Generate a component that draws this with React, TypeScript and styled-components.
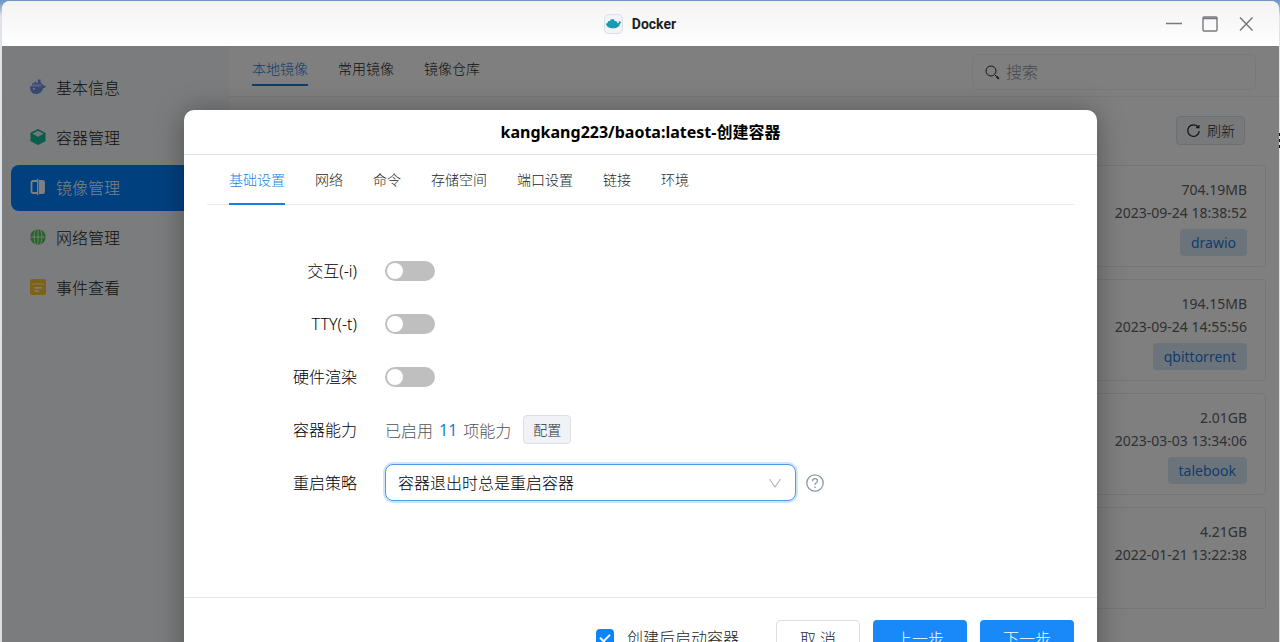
import React from "react";
import styled, { createGlobalStyle, css } from "styled-components";

const Global = createGlobalStyle`
  *, *::before, *::after { box-sizing: border-box; }
  body {
    margin: 0;
    overflow: hidden;
    font-family: "Noto Sans", "Noto Sans CJK SC", sans-serif;
    font-size: 16px;
    color: #1d1f23;
  }
  button, input, select { font: inherit; color: inherit; margin: 0; }
  button { cursor: pointer; padding: 0; border: 0; background: none; }
`;

const Desktop = styled.div`
  position: relative;
  height: 100vh;
  padding: 1px 1px 0 2px;
  overflow: hidden;
  background: linear-gradient(180deg, #6f93c4 0, #8fa9cc 6px, #dfe3ea 16px, #dcdee2 100%);
`;

const Window = styled.div`
  display: flex;
  flex-direction: column;
  height: 100%;
  border-radius: 8px 8px 0 0;
  overflow: hidden;
  background: #fff;
`;

const EdgeMarks = styled.svg`
  position: absolute;
  top: 132px;
  right: 0;
`;

const TitleBar = styled.header`
  display: grid;
  grid-template-columns: 1fr auto 1fr;
  align-items: center;
  flex: none;
  height: 45px;
  padding: 0 25px 0 24px;
  background: linear-gradient(180deg, #f3f3f4, #fff);
`;

const AppTitle = styled.h1`
  grid-column: 2;
  display: flex;
  align-items: center;
  gap: 9px;
  margin: 0;
  font-family: Roboto, "Noto Sans CJK SC", sans-serif;
  font-size: 14px;
  line-height: 20px;
  font-weight: 700;
`;

const WindowControls = styled.div`
  display: flex;
  justify-content: flex-end;
  gap: 20px;
`;

const ControlButton = styled.button`
  display: flex;
  width: 16px;
  height: 16px;
  color: #77797d;
`;

const Body = styled.div`
  position: relative;
  display: flex;
  flex: 1;
  min-height: 0;
`;

const Sidebar = styled.nav`
  display: flex;
  flex-direction: column;
  gap: 4px;
  flex: none;
  width: 228px;
  padding: 19px 9px;
  background: #f6f8fb;
`;

const NavItem = styled.button<{ $active?: boolean }>`
  display: flex;
  align-items: center;
  gap: 10px;
  height: 46px;
  padding: 0 19px 2px;
  border-radius: 8px;
  color: ${(p) => (p.$active ? "#fff" : "#1d1f23")};
  background: ${(p) => (p.$active ? "#0080ff" : "none")};
  font-weight: 300;
  svg { flex: none; }
`;

const Content = styled.main`
  flex: 1;
  min-width: 0;
`;

const TopBar = styled.div`
  display: flex;
  justify-content: space-between;
  height: 51px;
  padding: 8px 23px 0 22px;
  border-bottom: 1px solid #f0f1f3;
`;

const TabList = styled.div`
  display: flex;
  gap: 30px;
`;

const Tab = styled.button<{ $active?: boolean; $tall?: boolean }>`
  height: ${(p) => (p.$tall ? 50 : 32)}px;
  padding-top: ${(p) => (p.$tall ? 2 : 0)}px;
  font-size: 14px;
  line-height: 20px;
  font-weight: 300;
  color: ${(p) => (p.$active ? "#1a7fdc" : "#1d1f23")};
  border-bottom: 2px solid ${(p) => (p.$active ? "#1a7fdc" : "transparent")};
`;

const SearchBox = styled.label`
  display: flex;
  align-items: center;
  gap: 6px;
  width: 284px;
  height: 36px;
  padding: 0 12px;
  border: 1px solid #f0f1f3;
  border-radius: 6px;
  font-weight: 300;
  input {
    flex: 1;
    min-width: 0;
    padding: 0;
    border: 0;
    outline: 0;
    background: none;
  }
  input::placeholder { color: #8f929a; opacity: 1; }
`;

const Toolbar = styled.div`
  display: flex;
  justify-content: flex-end;
  padding: 19px 34px 20px;
`;

const SmallButton = styled.button`
  display: flex;
  align-items: center;
  justify-content: center;
  gap: 6px;
  height: 29px;
  padding: 0 9px;
  border: 1px solid #dcdfe6;
  border-radius: 4px;
  background: #f0f2f5;
  font-size: 14px;
  line-height: 20px;
  font-weight: 300;
`;

const CardList = styled.ul`
  display: flex;
  flex-direction: column;
  gap: 12px;
  margin: 0;
  padding: 0 13px 0 22px;
  list-style: none;
`;

const Card = styled.li`
  display: flex;
  flex-direction: column;
  align-items: flex-end;
  height: 102px;
  padding: 12px 18px;
  border: 1px solid #e9ebee;
  border-radius: 4px;
  color: #606266;
  font-size: 14px;
  line-height: 23px;
`;

const Tag = styled.span`
  margin-top: 5px;
  padding: 0 11px;
  border-radius: 4px;
  background: #d9e9f7;
  color: #1f78d8;
  line-height: 27px;
`;

const Overlay = styled.div`
  position: absolute;
  inset: 0;
  display: flex;
  justify-content: center;
  align-items: flex-start;
  padding: 64px 16px 0;
  overflow: hidden;
  background: rgba(0, 0, 0, 0.5);
`;

const Dialog = styled.section`
  width: 913px;
  max-width: 100%;
  border-radius: 10px;
  background: #fff;
  box-shadow: 0 2px 28px rgba(0, 0, 0, 0.35);
`;

const DialogTitle = styled.h2`
  margin: 0;
  padding: 10px 0;
  border-bottom: 1px solid #dfe1e4;
  color: #000;
  font-size: 16px;
  line-height: 24px;
  font-weight: 700;
  text-align: center;
`;

const DialogTabs = styled(TabList)`
  height: 50px;
  margin: 0 23px;
  padding: 0 22px;
  border-bottom: 1px solid #e8eaec;
`;

const Form = styled.form`
  display: grid;
  grid-template-columns: 150px 1fr;
  grid-auto-rows: 53px;
  column-gap: 28px;
  align-items: center;
  height: 392px;
  padding: 39px 23px 0;
  font-weight: 300;
`;

const FieldLabel = styled.label`
  text-align: right;
  line-height: 24px;
  color: #000;
`;

const Field = styled.div`
  display: flex;
  align-items: center;
  color: #505256;
`;

const Switch = styled.input`
  appearance: none;
  width: 50px;
  height: 20px;
  border-radius: 10px;
  background: #bfbfbf;
  cursor: pointer;
  &::before {
    content: "";
    display: block;
    width: 16px;
    height: 16px;
    margin: 2px;
    border-radius: 50%;
    background: #fff;
  }
  &:checked { background: #1989fa; }
  &:checked::before { margin-left: 32px; }
`;

const Count = styled.span`
  margin: 0 6px;
  color: #1a7fdc;
  font-weight: 400;
`;

const ConfigButton = styled(SmallButton)`
  margin-left: 12px;
  color: #2c2e33;
`;

const SelectWrap = styled.div`
  display: flex;
  align-items: center;
  width: 411px;
  svg {
    flex: none;
    margin-left: -28px;
    pointer-events: none;
  }
`;

const Select = styled.select`
  appearance: none;
  width: 100%;
  height: 37px;
  padding: 0 36px 0 12px;
  border: 1px solid #4a9bea;
  border-radius: 8px;
  outline: 0;
  background: #fff;
  color: #000;
  box-shadow: 0 0 0 2px #cfe5fb;
`;

const HelpButton = styled.button`
  display: flex;
  margin-left: 10px;
  color: #8a9bab;
`;

const Footer = styled.footer`
  display: flex;
  align-items: center;
  justify-content: flex-end;
  gap: 13px;
  padding: 22px 23px;
  border-top: 1px solid #e4e6e9;
  font-weight: 300;
`;

const CheckLabel = styled.label`
  display: flex;
  align-items: center;
  gap: 13px;
  margin-right: 24px;
  line-height: 24px;
`;

const CheckBox = styled.input`
  appearance: none;
  width: 18px;
  height: 18px;
  border: 1px solid #c4c8ce;
  border-radius: 4px;
  &:checked {
    border: 0;
    background: #0a84ff;
  }
  &:checked::before {
    content: "";
    display: block;
    width: 10px;
    height: 6px;
    margin: 5px 4px;
    border: solid #fff;
    border-width: 0 0 2px 2px;
    transform: rotate(-45deg);
  }
`;

const ActionButton = styled.button<{ $primary?: boolean }>`
  height: 36px;
  border-radius: 4px;
  ${(p) =>
    p.$primary
      ? css`
          width: 94px;
          background: #1989fa;
          color: #fff;
        `
      : css`
          width: 84px;
          border: 1px solid #dcdfe6;
          background: #fff;
        `}
`;

const DockerLogo = () => (
  <svg width="19" height="20" viewBox="0 0 19 20" aria-hidden="true">
    <rect x="0.5" y="0.5" width="18" height="19" rx="4" fill="#f1f3f6" stroke="#dcdfe4" />
    <path d="M2 9.700l1.500-.7.600-1.800 2-.2.800-1.800h3l.8 1.800 1.800.3 1.300 1.900c.7 0 1.100-.3 1.200-.7-.4-.6-.3-1.200 0-1.800l1 1.100 1.300.1c-.2.8-.6 1.200-1.200 1.500-.5 2.900-2.900 4.900-6.600 4.900C5.500 14.300 2.500 13 2 9.700z" fill="#189ab4" />
  </svg>
);

const WhaleIcon = () => (
  <svg width="16" height="16" viewBox="0 0 16 16" aria-hidden="true">
    <path d="M8 .500h2.500v3.300h1.200v2.700H2V4.200h2.300V2.800h2.200v1H8z" fill="#6c8fe8" />
    <path d="M0 7.300h11.500c-.1-1-.3-1.700.2-2.600 1 .4 1.500 1.100 1.600 1.900.9-.2 1.900 0 2.700.6-.6 1.300-1.700 1.700-2.700 1.800C12.300 12.800 9.800 15 6 15 2 15 0 12.200 0 7.300z" fill="#6c8fe8" />
    <path d="M2 5.300h9" stroke="#f6f8fb" strokeWidth="0.400" />
    <circle cx="4" cy="9.800" r="1" fill="#f6f8fb" />
  </svg>
);

const CubeIcon = () => (
  <svg width="16" height="16" viewBox="0 0 16 16" aria-hidden="true">
    <path d="M8 .300l7.200 3.600v8.200L8 15.700.800 12.100V3.900z" fill="#18b898" stroke="#18b898" strokeWidth="0.600" strokeLinejoin="round" />
    <path d="M8 1.800l5.600 2.900L8 7.700 2.400 4.700z" fill="#e4f3f2" />
  </svg>
);

const ImageIcon = () => (
  <svg width="16" height="16" viewBox="0 0 16 16" aria-hidden="true">
    <path d="M7 2H3a1.500 1.500 0 0 0-1.500 1.500v9A1.500 1.500 0 0 0 3 14h4" fill="none" stroke="#fff" strokeWidth="1.800" />
    <path d="M7 0h1.400v16H7zM9 1.100h4A1.900 1.900 0 0 1 14.900 3v10a1.900 1.900 0 0 1-1.900 1.900H9z" fill="#fff" />
  </svg>
);

const GlobeIcon = () => (
  <svg width="16" height="16" viewBox="0 0 16 16" aria-hidden="true">
    <circle cx="8" cy="8" r="7.800" fill="#4cc850" />
    <path d="M0 8h16M8 0v16M6 0C3.500 4.500 3.500 11.500 6 16M10 0c2.500 4.500 2.500 11.500 0 16" fill="none" stroke="#f6f8fb" strokeWidth="0.900" />
  </svg>
);

const EventIcon = () => (
  <svg width="16" height="16" viewBox="0 0 16 16" aria-hidden="true">
    <rect width="16" height="16" rx="2" fill="#fcc42c" />
    <path d="M1.500 5h13" stroke="#fff3cf" strokeWidth="1" />
    <path d="M4.500 8.800h7.500M4.500 12h4.500" stroke="#fff" strokeWidth="1.400" />
  </svg>
);

const SearchIcon = () => (
  <svg width="15" height="15" viewBox="0 0 15 15" fill="none" stroke="#303238" aria-hidden="true">
    <circle cx="6" cy="6" r="5" strokeWidth="1" />
    <path d="M9.700 9.700l1.500 1.500" strokeWidth="1" />
    <path d="M11.200 11.200l2.600 2.600" strokeWidth="1.800" />
  </svg>
);

const RefreshIcon = () => (
  <svg width="15" height="15" viewBox="0 0 15 15" fill="none" stroke="#1d1f23" strokeWidth="1.200" aria-hidden="true">
    <path d="M12.300 4.300A5.800 5.800 0 1 0 13.300 8" />
    <path d="M12.900 2v2.700h-2.700" />
  </svg>
);

const MinimizeIcon = () => (
  <svg width="16" height="16" viewBox="0 0 16 16" aria-hidden="true">
    <path d="M0 7.500h16" stroke="currentColor" strokeWidth="1.400" />
  </svg>
);

const MaximizeIcon = () => (
  <svg width="16" height="16" viewBox="0 0 16 16" fill="none" stroke="currentColor" aria-hidden="true">
    <rect x="1" y="1" width="14" height="14" rx="1" strokeWidth="1.400" />
    <path d="M1 2.500h14" strokeWidth="1.400" />
  </svg>
);

const CloseIcon = () => (
  <svg width="16" height="16" viewBox="0 0 16 16" aria-hidden="true">
    <path d="M2 1.500l12.500 13M14.500 1.500L2 14.500" stroke="currentColor" strokeWidth="1.500" />
  </svg>
);

const ChevronIcon = () => (
  <svg width="14" height="14" viewBox="0 0 14 14" fill="none" stroke="#b4b8bf" aria-hidden="true">
    <path d="M1.500 3L7 11l5.500-8" strokeWidth="1.200" />
  </svg>
);

const HelpIcon = () => (
  <svg width="18" height="18" viewBox="0 0 18 18" fill="none" stroke="currentColor" aria-hidden="true">
    <circle cx="9" cy="9" r="8.200" strokeWidth="1.300" />
    <path d="M6.500 7.200C6.500 5.600 7.500 4.700 9 4.700s2.500.9 2.500 2.200c0 1.900-2.500 1.900-2.500 4" strokeWidth="1.300" />
    <circle cx="9" cy="13.200" r="0.600" fill="currentColor" strokeWidth="0.500" />
  </svg>
);

const navItems = [
  { label: "基本信息", icon: <WhaleIcon /> },
  { label: "容器管理", icon: <CubeIcon /> },
  { label: "镜像管理", icon: <ImageIcon />, active: true },
  { label: "网络管理", icon: <GlobeIcon /> },
  { label: "事件查看", icon: <EventIcon /> },
];

const images = [
  { size: "704.19MB", date: "2023-09-24 18:38:52", tag: "drawio" },
  { size: "194.15MB", date: "2023-09-24 14:55:56", tag: "qbittorrent" },
  { size: "2.01GB", date: "2023-03-03 13:34:06", tag: "talebook" },
  { size: "4.21GB", date: "2022-01-21 13:22:38" },
];

const pageTabs = ["本地镜像", "常用镜像", "镜像仓库"];
const dialogTabs = ["基础设置", "网络", "命令", "存储空间", "端口设置", "链接", "环境"];
const switches = [
  { id: "interactive", label: "交互(-i)" },
  { id: "tty", label: "TTY(-t)" },
  { id: "hardware", label: "硬件渲染" },
];

export default function App() {
  return (
    <Desktop>
      <Global />
      <Window>
        <TitleBar>
          <AppTitle>
            <DockerLogo />
            Docker
          </AppTitle>
          <WindowControls>
            <ControlButton aria-label="最小化"><MinimizeIcon /></ControlButton>
            <ControlButton aria-label="最大化"><MaximizeIcon /></ControlButton>
            <ControlButton aria-label="关闭"><CloseIcon /></ControlButton>
          </WindowControls>
        </TitleBar>
        <Body>
          <Sidebar>
            {navItems.map((item) => (
              <NavItem key={item.label} $active={item.active}>
                {item.icon}
                {item.label}
              </NavItem>
            ))}
          </Sidebar>
          <Content>
            <TopBar>
              <TabList>
                {pageTabs.map((tab, i) => (
                  <Tab key={tab} $active={i === 0}>{tab}</Tab>
                ))}
              </TabList>
              <SearchBox>
                <SearchIcon />
                <input type="search" placeholder="搜索" aria-label="搜索" />
              </SearchBox>
            </TopBar>
            <Toolbar>
              <SmallButton>
                <RefreshIcon />
                刷新
              </SmallButton>
            </Toolbar>
            <CardList>
              {images.map((image) => (
                <Card key={image.date}>
                  <span>{image.size}</span>
                  <time>{image.date}</time>
                  {image.tag && <Tag>{image.tag}</Tag>}
                </Card>
              ))}
            </CardList>
          </Content>
          <Overlay>
            <Dialog role="dialog" aria-labelledby="dialog-title">
              <DialogTitle id="dialog-title">kangkang223/baota:latest-创建容器</DialogTitle>
              <DialogTabs>
                {dialogTabs.map((tab, i) => (
                  <Tab key={tab} $tall $active={i === 0}>{tab}</Tab>
                ))}
              </DialogTabs>
              <Form>
                {switches.map(({ id, label }) => (
                  <React.Fragment key={id}>
                    <FieldLabel htmlFor={id}>{label}</FieldLabel>
                    <Field>
                      <Switch id={id} type="checkbox" role="switch" />
                    </Field>
                  </React.Fragment>
                ))}
                <FieldLabel htmlFor="capabilities">容器能力</FieldLabel>
                <Field>
                  已启用<Count>11</Count>项能力
                  <ConfigButton id="capabilities" type="button">配置</ConfigButton>
                </Field>
                <FieldLabel htmlFor="restart">重启策略</FieldLabel>
                <Field>
                  <SelectWrap>
                    <Select id="restart" defaultValue="always">
                      <option value="always">容器退出时总是重启容器</option>
                    </Select>
                    <ChevronIcon />
                  </SelectWrap>
                  <HelpButton type="button" aria-label="帮助"><HelpIcon /></HelpButton>
                </Field>
              </Form>
              <Footer>
                <CheckLabel>
                  <CheckBox type="checkbox" defaultChecked />
                  创建后启动容器
                </CheckLabel>
                <ActionButton>取 消</ActionButton>
                <ActionButton $primary>上一步</ActionButton>
                <ActionButton $primary>下一步</ActionButton>
              </Footer>
            </Dialog>
          </Overlay>
        </Body>
      </Window>
      <EdgeMarks width="1" height="20" viewBox="0 0 1 20" aria-hidden="true">
        <path d="M.5 1v18" stroke="#111" strokeDasharray="3 3" />
      </EdgeMarks>
    </Desktop>
  );
}
